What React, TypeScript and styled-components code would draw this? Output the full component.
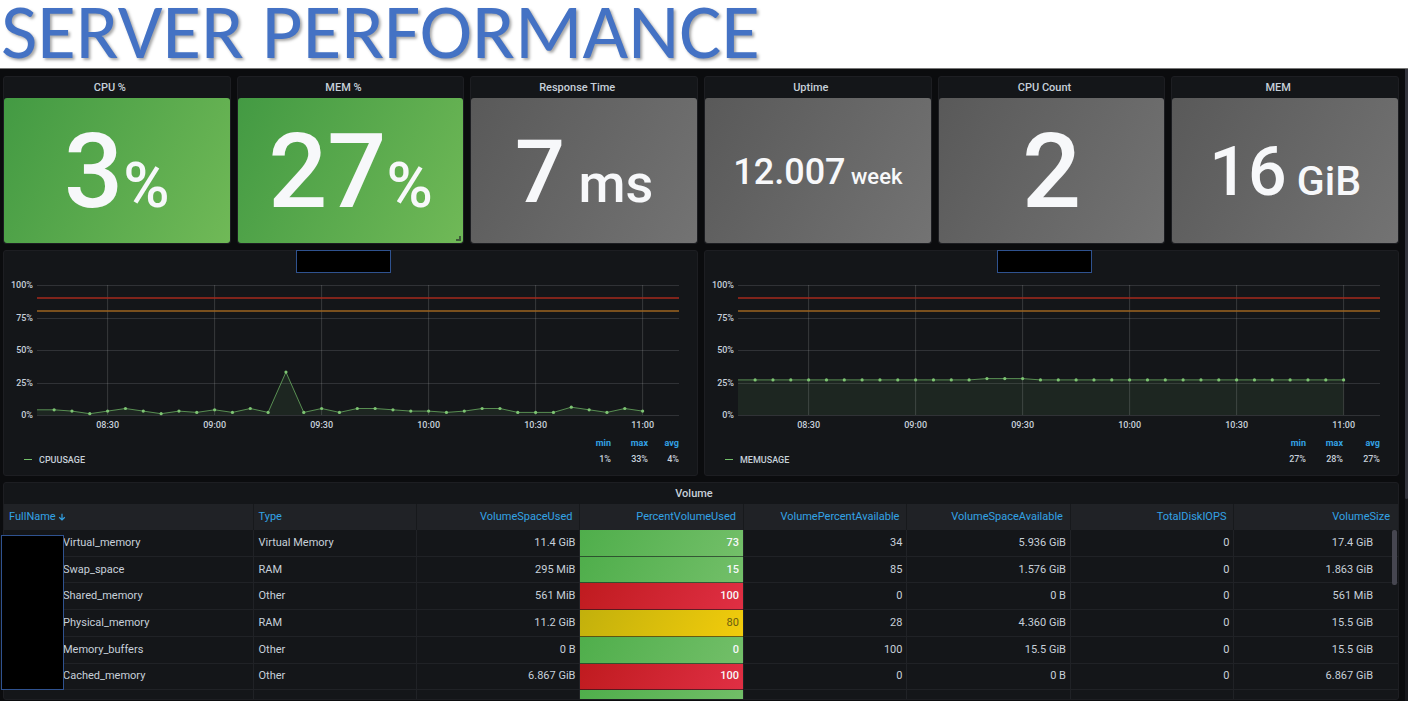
import React, { useLayoutEffect, useRef, useState } from "react";
import styled, { createGlobalStyle } from "styled-components";

const GlobalStyle = createGlobalStyle`
  *, *::before, *::after { box-sizing: border-box; }
  body {
    margin: 0;
    background: #0b0c0e;
    color: #c7d0d9;
    font-family: Roboto, "Liberation Sans", sans-serif;
    font-size: 11px;
  }
`;

const Page = styled.div`
  display: flex;
  flex-direction: column;
  min-height: 100vh;
`;

const Banner = styled.header`
  height: 69px;
  padding-left: 1px;
  background: #fff;
  border-bottom: 1px solid #777;
`;

const BannerTitle = styled.h1`
  margin: 0;
  color: #4472c4;
  font-family: Carlito, Lato, sans-serif;
  font-weight: 400;
  font-size: 79px;
  line-height: 63px;
  white-space: nowrap;
  text-shadow: 2px 2px 3px rgba(0, 0, 0, 0.35);
`;

const Viewport = styled.div`
  display: flex;
  flex: 1;
`;

const Dashboard = styled.main`
  flex: 1;
  min-width: 0;
  display: flex;
  flex-direction: column;
  gap: 6px;
  padding: 7px 6px 0 3px;
`;

const PageScroll = styled.div`
  width: 3px;
  background: #17181c;
`;

const PageThumb = styled.div`
  height: 430px;
  background: #33343d;
  border-radius: 0 0 2px 2px;
`;

const StatRow = styled.section`
  display: grid;
  grid-template-columns: repeat(6, 1fr);
  gap: 6px;
`;

const GraphRow = styled.section`
  display: grid;
  grid-template-columns: repeat(2, 1fr);
  gap: 6px;
`;

const Panel = styled.article`
  position: relative;
  min-width: 0;
  background: #141619;
  border: 1px solid #1d1e22;
  border-radius: 3px;
`;

const PanelTitle = styled.h2`
  margin: 0;
  padding-right: 14px;
  color: #c7d0d9;
  font-size: 11px;
  font-weight: 500;
  line-height: 21px;
  text-align: center;
`;

const StatBody = styled.div<{ $tone: "green" | "gray" }>`
  height: 145px;
  padding-top: 3px;
  display: flex;
  align-items: center;
  justify-content: center;
  border-radius: 3px;
  color: #f7f8fa;
  background: ${(p) =>
    p.$tone === "green"
      ? "linear-gradient(120deg, #439a43, #70b957)"
      : "linear-gradient(120deg, #595959, #737373)"};
`;

const StatValue = styled.div<{ $size: number }>`
  font-size: ${(p) => p.$size}px;
  font-weight: 500;
  line-height: 120px;
  white-space: pre;
`;

const StatUnit = styled.span<{ $size: number }>`
  font-size: ${(p) => p.$size}px;
  line-height: 0;
`;

const ResizeCorner = styled.span`
  position: absolute;
  right: 2px;
  bottom: 2px;
  width: 5px;
  height: 5px;
  border-right: 2px solid #3d5a38;
  border-bottom: 2px solid #3d5a38;
`;

const GraphTitle = styled.header`
  display: flex;
  justify-content: center;
  margin-top: -1px;
  padding-right: 14px;
`;

const Redaction = styled.div`
  width: 95px;
  height: 23px;
  background: #000;
  border: 1px solid #2f528f;
`;

const PlotArea = styled.div`
  height: 162px;
`;

const PlotSvg = styled.svg`
  display: block;
  width: 100%;
  height: 100%;
  overflow: visible;
`;

const AxisText = styled.text`
  fill: #c7d0d9;
  font-size: 9px;
  font-weight: 500;
`;

const Legend = styled.table`
  width: 100%;
  border-collapse: collapse;
  font-size: 9px;
  margin-bottom: 8px;

  th, td {
    padding: 0;
    height: 16px;
    text-align: right;
    font-weight: 500;
    white-space: nowrap;
  }
  thead th {
    color: #33a2e5;
    font-weight: 700;
    font-size: 9px;
  }
  th:first-child {
    text-align: left;
    padding-left: 20px;
  }
  th:last-child, td:last-child {
    padding-right: 18px;
  }
`;

const LegendCol = styled.col<{ $width: number }>`
  width: ${(p) => p.$width}px;
`;

const SeriesDash = styled.span`
  display: inline-block;
  width: 8px;
  height: 1px;
  margin-right: 7px;
  vertical-align: middle;
  background: #73bf69;
`;

const SeriesName = styled.span`
  vertical-align: middle;
`;

const TableScroll = styled.div`
  position: relative;
  height: 195px;
  overflow: hidden;
`;

const DataTable = styled.table`
  width: 100%;
  height: 213px;
  table-layout: fixed;
  border-collapse: separate;
  border-spacing: 0;
`;

const HeadCell = styled.th<{ $left?: boolean; $wide?: boolean }>`
  width: ${(p) => (p.$wide ? "17.9%" : "auto")};
  height: 26px;
  padding: 0 7px 0 5px;
  background: #202226;
  border-right: 1px solid #17191c;
  color: #33a2e5;
  font-weight: 400;
  line-height: 14px;
  text-align: ${(p) => (p.$left ? "left" : "right")};
  white-space: nowrap;

  &:last-child { border-right: 0; padding-right: 8px; }
`;

const SortButton = styled.button`
  display: inline-flex;
  align-items: center;
  gap: 2px;
  padding: 0;
  border: 0;
  background: none;
  color: inherit;
  font: inherit;
`;

const fills = {
  green: "linear-gradient(120deg, #4fae4b, #73bf69)",
  red: "linear-gradient(120deg, #bf1b1f, #e02f44)",
  yellow: "linear-gradient(120deg, #c2b00c, #f2cc0c)",
};

const Cell = styled.td<{ $left?: boolean; $masked?: boolean; $fill?: keyof typeof fills }>`
  height: 26px;
  padding: 0 4px 0 ${(p) => (p.$masked ? 59 : 5)}px;
  border-right: 1px solid #202226;
  border-bottom: 1px solid ${(p) => (p.$fill ? "rgba(20, 22, 25, 0.6)" : "#202226")};
  background: ${(p) => (p.$fill ? fills[p.$fill] : "none")};
  color: ${(p) => (p.$fill ? (p.$fill === "yellow" ? "#6b5c10" : "#f7f8fa") : "inherit")};
  font-weight: ${(p) => (p.$fill && p.$fill !== "yellow" ? 500 : 400)};
  line-height: 14px;
  text-align: ${(p) => (p.$left ? "left" : "right")};
  white-space: nowrap;

  &:last-child {
    border-right: 0;
    padding-right: 25px;
  }
`;

const NameMask = styled.div`
  position: absolute;
  left: -3px;
  top: 52px;
  width: 63px;
  height: 155px;
  background: #000;
  border: 1px solid #2f528f;
`;

const TableThumb = styled.div`
  position: absolute;
  right: 1px;
  top: 26px;
  width: 5px;
  height: 55px;
  border-radius: 2px;
  background: #464650;
`;

type Stat = { title: string; value: string; unit: string; size: number; unitSize: number; tone: "green" | "gray"; corner?: boolean };

const stats: Stat[] = [
  { title: "CPU %", value: "3", unit: "%", size: 104, unitSize: 63, tone: "green" },
  { title: "MEM %", value: "27", unit: "%", size: 104, unitSize: 63, tone: "green", corner: true },
  { title: "Response Time", value: "7", unit: " ms", size: 88, unitSize: 54, tone: "gray" },
  { title: "Uptime", value: "12.007", unit: " week", size: 36, unitSize: 22, tone: "gray" },
  { title: "CPU Count", value: "2", unit: "", size: 104, unitSize: 63, tone: "gray" },
  { title: "MEM", value: "16", unit: " GiB", size: 68, unitSize: 41, tone: "gray" },
];

const times = ["08:30", "09:00", "09:30", "10:00", "10:30", "11:00"];

const cpu = [4, 3, 1, 3, 5, 3, 1, 3, 2, 4, 2, 5, 2, 33, 2, 5, 2, 5, 5, 4, 3, 3, 2, 3, 5, 5, 2, 2, 2, 6, 4, 2, 5, 3];
const mem = cpu.map((_, i) => (i >= 13 && i <= 15 ? 28 : 27));

const PLOT = { left: 33, right: 18, top: 12, bottom: 142 };

function Plot({ values, label }: { values: number[]; label: string }) {
  const host = useRef<HTMLDivElement>(null);
  const [width, setWidth] = useState(693);

  useLayoutEffect(() => {
    const node = host.current;
    if (!node) return;
    const update = () => setWidth(node.clientWidth);
    update();
    const observer = new ResizeObserver(update);
    observer.observe(node);
    return () => observer.disconnect();
  }, []);

  const right = width - PLOT.right;
  const span = right - PLOT.left;
  // The window covers three hours; 08:30 falls 11% of the way in.
  const timeX = (minutes: number) => PLOT.left + span * (0.11 + minutes / 180);
  const y = (v: number) => PLOT.bottom - ((PLOT.bottom - PLOT.top) * v) / 100;
  const points = values.map((v, i) => [timeX((i - 3) * 5), y(v)]);
  const line = [[PLOT.left, y(values[0])], ...points].map((p) => p.join(",")).join(" ");
  const lastX = points[points.length - 1][0];

  return (
    <PlotArea ref={host}>
      <PlotSvg role="img" aria-label={label}>
        {[0, 25, 50, 75, 100].map((v) => (
          <g key={v}>
            <line x1={PLOT.left} x2={right} y1={Math.round(y(v)) + 0.5} y2={Math.round(y(v)) + 0.5} stroke="#303236" />
            <AxisText x={PLOT.left - 4} y={Math.round(y(v)) + 3} textAnchor="end">{v}%</AxisText>
          </g>
        ))}
        <polygon points={`${PLOT.left},${PLOT.bottom} ${line} ${lastX},${PLOT.bottom}`} fill="#73bf69" fillOpacity="0.1" />
        {times.map((t, i) => (
          <g key={t}>
            <line x1={timeX(i * 30)} x2={timeX(i * 30)} y1={PLOT.top} y2={PLOT.bottom} stroke="#c8c8c8" strokeOpacity="0.2" />
            <AxisText x={timeX(i * 30)} y={PLOT.bottom + 13} textAnchor="middle">{t}</AxisText>
          </g>
        ))}
        <polyline points={line} fill="none" stroke="#73bf69" strokeOpacity="0.7" />
        {points.map(([px, py], i) => (
          <circle key={i} cx={px} cy={py} r="1.6" fill="#7ec573" />
        ))}
        <line x1={PLOT.left} x2={right} y1={y(90)} y2={y(90)} stroke="#a52a1c" strokeWidth="1.6" />
        <line x1={PLOT.left} x2={right} y1={y(80)} y2={y(80)} stroke="#9c6420" strokeWidth="1.6" />
      </PlotSvg>
    </PlotArea>
  );
}

type GraphProps = { name: string; values: number[]; summary: string[]; cols: number[] };

function Graph({ name, values, summary, cols }: GraphProps) {
  return (
    <Panel>
      <GraphTitle><Redaction /></GraphTitle>
      <Plot values={values} label={`${name} over time`} />
      <Legend>
        <colgroup>
          <col />
          {cols.map((w, i) => <LegendCol key={i} $width={w} />)}
        </colgroup>
        <thead>
          <tr><th /><th scope="col">min</th><th scope="col">max</th><th scope="col">avg</th></tr>
        </thead>
        <tbody>
          <tr>
            <th scope="row"><SeriesDash /><SeriesName>{name}</SeriesName></th>
            {summary.map((s, i) => <td key={i}>{s}</td>)}
          </tr>
        </tbody>
      </Legend>
    </Panel>
  );
}

const columns = ["VolumeSpaceUsed", "PercentVolumeUsed", "VolumePercentAvailable", "VolumeSpaceAvailable", "TotalDiskIOPS", "VolumeSize"];

type Row = { name: string; type: string; fill: keyof typeof fills; values: string[] };

const rows: Row[] = [
  { name: "Virtual_memory", type: "Virtual Memory", fill: "green", values: ["11.4 GiB", "73", "34", "5.936 GiB", "0", "17.4 GiB"] },
  { name: "Swap_space", type: "RAM", fill: "green", values: ["295 MiB", "15", "85", "1.576 GiB", "0", "1.863 GiB"] },
  { name: "Shared_memory", type: "Other", fill: "red", values: ["561 MiB", "100", "0", "0 B", "0", "561 MiB"] },
  { name: "Physical_memory", type: "RAM", fill: "yellow", values: ["11.2 GiB", "80", "28", "4.360 GiB", "0", "15.5 GiB"] },
  { name: "Memory_buffers", type: "Other", fill: "green", values: ["0 B", "0", "100", "15.5 GiB", "0", "15.5 GiB"] },
  { name: "Cached_memory", type: "Other", fill: "red", values: ["6.867 GiB", "100", "0", "0 B", "0", "6.867 GiB"] },
  { name: "", type: "", fill: "green", values: ["", "", "", "", "", ""] },
];

function SortArrow() {
  return (
    <svg width="8" height="8" viewBox="0 0 8 8" fill="none" stroke="currentColor" strokeWidth="1.2" aria-hidden="true">
      <path d="M4 0.8V7M1.2 4.3L4 7L6.8 4.3" />
    </svg>
  );
}

function VolumePanel() {
  return (
    <Panel>
      <PanelTitle>Volume</PanelTitle>
      <TableScroll>
        <DataTable>
          <thead>
            <tr>
              <HeadCell $left $wide scope="col"><SortButton type="button">FullName<SortArrow /></SortButton></HeadCell>
              <HeadCell $left scope="col">Type</HeadCell>
              {columns.map((c) => <HeadCell key={c} scope="col">{c}</HeadCell>)}
            </tr>
          </thead>
          <tbody>
            {rows.map((r, i) => (
              <tr key={i}>
                <Cell $left $masked>{r.name}</Cell>
                <Cell $left>{r.type}</Cell>
                {r.values.map((v, j) => <Cell key={j} $fill={j === 1 ? r.fill : undefined}>{v}</Cell>)}
              </tr>
            ))}
          </tbody>
        </DataTable>
        <TableThumb />
      </TableScroll>
      <NameMask />
    </Panel>
  );
}

export default function App() {
  return (
    <Page>
      <GlobalStyle />
      <Banner><BannerTitle>SERVER PERFORMANCE</BannerTitle></Banner>
      <Viewport>
        <Dashboard>
          <StatRow>
            {stats.map((s) => (
              <Panel key={s.title}>
                <PanelTitle>{s.title}</PanelTitle>
                <StatBody $tone={s.tone}>
                  <StatValue $size={s.size}>
                    {s.value}
                    {s.unit && <StatUnit $size={s.unitSize}>{s.unit}</StatUnit>}
                  </StatValue>
                </StatBody>
                {s.corner && <ResizeCorner />}
              </Panel>
            ))}
          </StatRow>
          <GraphRow>
            <Graph name="CPUUSAGE" values={cpu} summary={["1%", "33%", "4%"]} cols={[36, 37, 49]} />
            <Graph name="MEMUSAGE" values={mem} summary={["27%", "28%", "27%"]} cols={[36, 37, 55]} />
          </GraphRow>
          <VolumePanel />
        </Dashboard>
        <PageScroll><PageThumb /></PageScroll>
      </Viewport>
    </Page>
  );
}
